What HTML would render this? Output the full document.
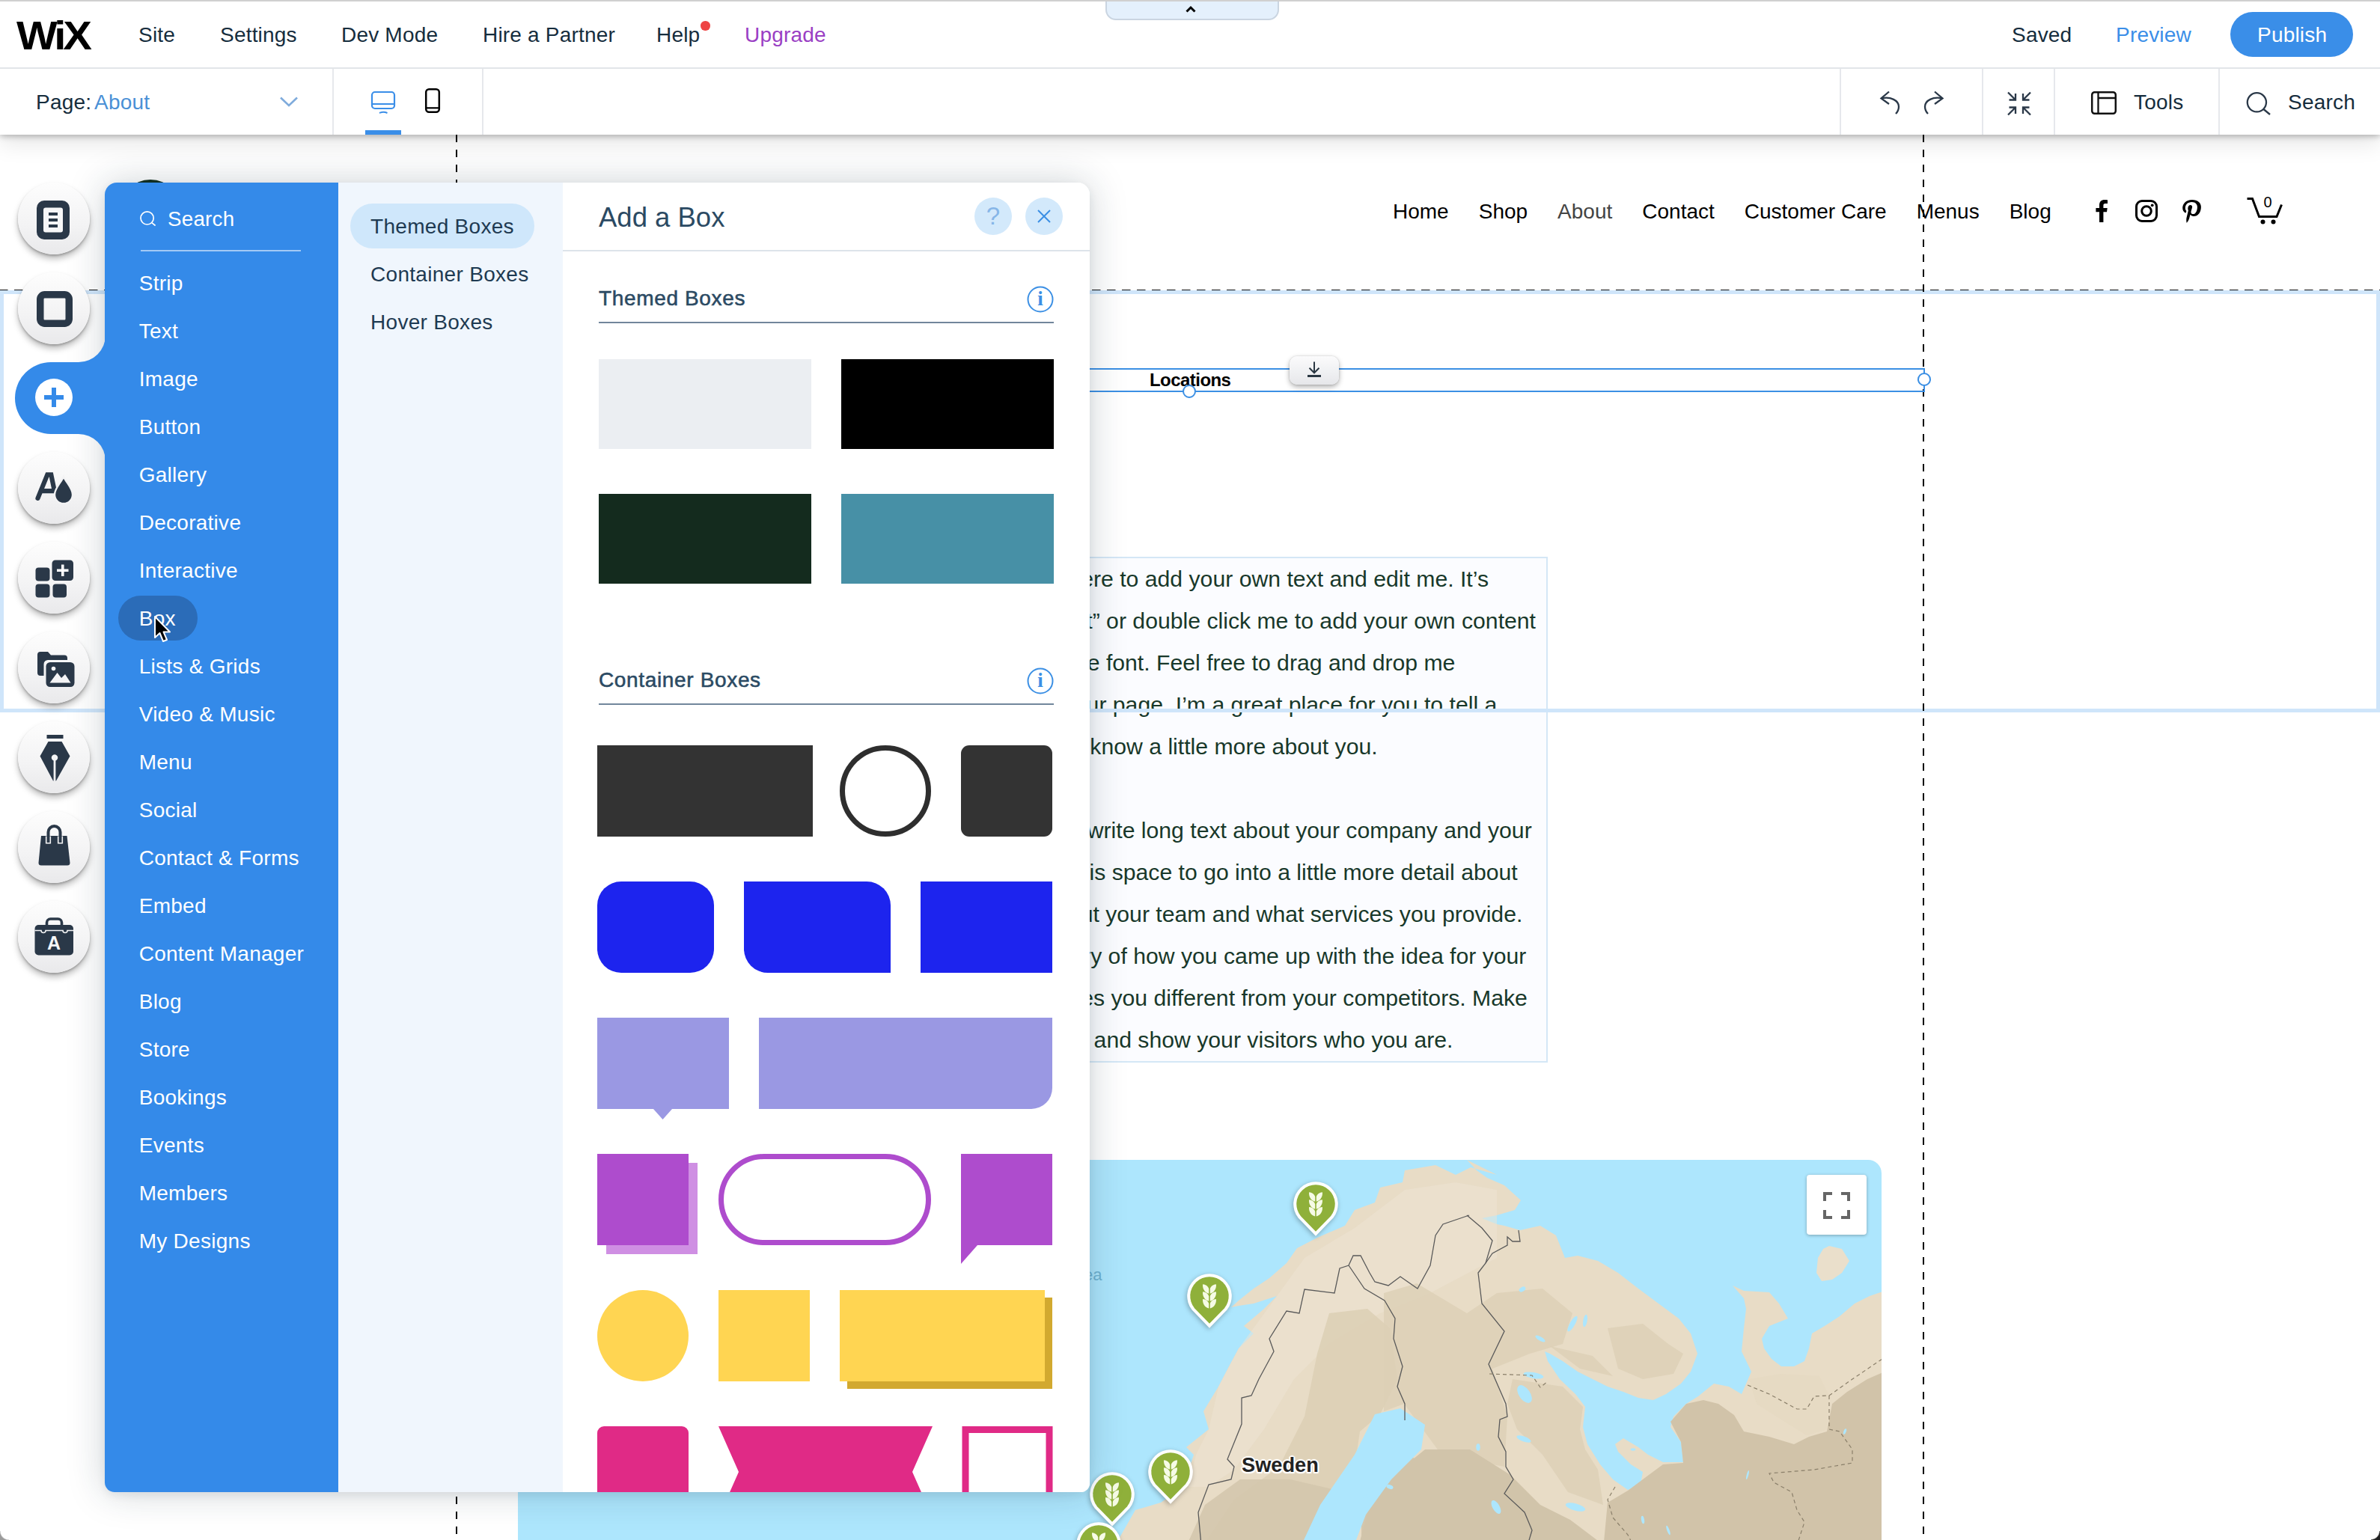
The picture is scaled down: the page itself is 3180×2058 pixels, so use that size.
<!DOCTYPE html>
<html lang="en">
<head>
<meta charset="utf-8">
<title>Wix Editor - Add a Box</title>
<style>
*{box-sizing:border-box;margin:0;padding:0}
html,body{width:3180px;height:2058px;overflow:hidden;background:#fff}
body{position:relative;font-family:"Liberation Sans",Arial,Helvetica,sans-serif;color:#162d3d;font-size:28px;line-height:32px}
.abs{position:absolute}
.t{position:absolute;white-space:nowrap;line-height:32px}
svg{position:absolute;overflow:visible}
/* ---------- top bars ---------- */
#topbar{left:0;top:0;width:3180px;height:92px;background:#fff;border-bottom:2px solid #e2e5e9;z-index:50}
#topline{left:0;top:0;width:3180px;height:2px;background:#d0d0d0;z-index:60}
#bar2{left:0;top:92px;width:3180px;height:88px;background:#fff;z-index:49;box-shadow:0 2px 8px rgba(0,0,0,.28),0 12px 30px rgba(0,0,0,.10)}
.vdiv{position:absolute;top:92px;width:2px;height:88px;background:#e6e8ec;z-index:51}
.top{z-index:55;letter-spacing:.2px}
#publish{left:2980px;top:16px;width:164px;height:60px;border-radius:30px;background:#3a8ee8;z-index:55}
/* ---------- canvas ---------- */
#canvas{left:0;top:0;width:3180px;height:2058px;background:#fff;z-index:1;overflow:hidden}
.nav{position:absolute;white-space:nowrap;top:86px;font-size:28px;line-height:32px;color:#000}
/* ---------- left rail ---------- */
.rb{position:absolute;left:24px;width:96px;height:96px;border-radius:50%;background:linear-gradient(180deg,#fdfdfd 0%,#f3f3f4 60%,#e9e9eb 100%);box-shadow:0 6px 9px rgba(0,0,0,.26),0 2px 3px rgba(0,0,0,.22);z-index:30}
/* ---------- panel ---------- */
#panel{left:140px;top:244px;width:1316px;height:1750px;border-radius:16px 16px 12px 13px;z-index:20;box-shadow:0 0 50px rgba(22,45,61,.21),0 4px 12px rgba(22,45,61,.08);overflow:hidden;background:#fff}
#cat{left:0;top:0;width:312px;height:1750px;background:#348ae9}
#sub{left:312px;top:0;width:300px;height:1750px;background:#f0f6fd}
#main{left:612px;top:0;width:704px;height:1750px;background:#fff}
.ci{position:absolute;left:45.700px;white-space:nowrap;color:#fff;font-size:28px;line-height:32px;letter-spacing:.27px}
.si{position:absolute;left:43px;white-space:nowrap;color:#1e3a52;font-size:28px;line-height:32px;letter-spacing:.3px}
</style>
</head>
<body>
<!-- ================= TOP BAR ================= -->
<div id="topbar" class="abs"></div>
<div id="topline" class="abs"></div>
<div class="t top" style="left:22px;top:16.500px;font-size:58px;line-height:64px;font-weight:bold;color:#000;letter-spacing:-4px;transform-origin:0 0;transform:scale(1.0,.94)">WiX</div>
<div class="t top" style="left:185px;top:31px">Site</div>
<div class="t top" style="left:294px;top:31px">Settings</div>
<div class="t top" style="left:456px;top:31px">Dev Mode</div>
<div class="t top" style="left:645px;top:31px">Hire a Partner</div>
<div class="t top" style="left:877px;top:31px">Help</div>
<div class="abs top" style="left:936px;top:28px;width:12.500px;height:12.500px;border-radius:50%;background:#ee4444"></div>
<div class="t top" style="left:995px;top:31px;color:#9a3fc4">Upgrade</div>
<div class="abs top" style="left:1477px;top:-4px;width:232px;height:31px;border-radius:0 0 14px 14px;background:#e4f0fc;border:2px solid #cad5e1"></div>
<svg class="top" style="left:1584px;top:8px" width="14" height="9" viewBox="0 0 14 9"><path d="M1.5 7.5 L7 2 L12.5 7.5" fill="none" stroke="#000" stroke-width="3"/></svg>
<div class="t top" style="left:2688px;top:31px">Saved</div>
<div class="t top" style="left:2827px;top:31px;color:#3a8ee8">Preview</div>
<div id="publish" class="abs"></div>
<div class="t top" style="left:3016px;top:31px;color:#fff">Publish</div>

<!-- ================= SECOND BAR ================= -->
<div id="bar2" class="abs"></div>
<div class="t top" style="left:48px;top:121px">Page:</div>
<div class="t top" style="left:126px;top:121px;color:#4a90d6">About</div>
<div class="vdiv" style="left:444px"></div>
<div class="vdiv" style="left:644px"></div>
<div class="vdiv" style="left:2458px"></div>
<div class="vdiv" style="left:2648px"></div>
<div class="vdiv" style="left:2744px"></div>
<div class="vdiv" style="left:2964px"></div>
<div class="abs top" style="left:488px;top:174px;width:48px;height:6px;background:#3a8ee8"></div>
<div class="t top" style="left:2851px;top:121px">Tools</div>
<div class="t top" style="left:3057px;top:121px">Search</div>
<svg class="top" style="left:0;top:92px" width="3180" height="88" viewBox="0 92 3180 88"><path d="M375 130.500 L386 141 L397 130.500" fill="none" stroke="#7fabdc" stroke-width="2.600"/><rect x="497" y="123" width="30" height="22" rx="4" fill="none" stroke="#3a8ee8" stroke-width="2.200"/><path d="M497 139 H527" stroke="#3a8ee8" stroke-width="2"/><path d="M507 151 Q512 148.500 517.500 151" fill="none" stroke="#3a8ee8" stroke-width="2"/><rect x="569.200" y="119.200" width="17.600" height="30.600" rx="4" fill="none" stroke="#000" stroke-width="2.500"/><path d="M569 144.300 H587" stroke="#000" stroke-width="2.200"/><path d="M2524 122.500 L2513.500 131.500 L2524 139" fill="none" stroke="#2a3848" stroke-width="2.300"/><path d="M2514.500 131.300 C2526 129 2537 134 2537 142.500 C2537 146.500 2535.500 149.500 2533 152" fill="none" stroke="#2a3848" stroke-width="2.300"/><path d="M2585 122.500 L2595.500 131.500 L2585 139" fill="none" stroke="#2a3848" stroke-width="2.300"/><path d="M2594.500 131.300 C2583 129 2572 134 2572 142.500 C2572 146.500 2573.500 149.500 2576 152" fill="none" stroke="#2a3848" stroke-width="2.300"/><path d="M2683 123.500 L2693 133.500 M2693 125 V133.500 H2684.500 M2713 123.500 L2703 133.500 M2703 125 V133.500 H2711.500 M2683 153.500 L2693 143.500 M2693 152 V143.500 H2684.500 M2713 153.500 L2703 143.500 M2703 152 V143.500 H2711.500" fill="none" stroke="#2a3848" stroke-width="2.300"/><rect x="2795.200" y="123.200" width="31.600" height="28.600" rx="3.500" fill="none" stroke="#111" stroke-width="2.500"/><path d="M2803.500 123 V152 M2803.500 131 H2827" stroke="#111" stroke-width="2.300" fill="none"/><circle cx="3015.400" cy="136.800" r="12.600" fill="none" stroke="#2a3848" stroke-width="2.300"/><path d="M3024.500 146 L3033 153" stroke="#2a3848" stroke-width="2.300"/></svg>

<!-- ================= CANVAS ================= -->
<div id="canvas" class="abs">
<div class="abs" style="left:159px;top:240px;width:84px;height:84px;border-radius:50%;background:#12301f"></div>
<div class="abs" style="left:1861px;top:266.500px;display:flex;gap:40px;font-size:28px;line-height:32px;white-space:nowrap"><span style="color:#000">Home</span><span style="color:#000">Shop</span><span style="color:#444">About</span><span style="color:#000">Contact</span><span style="color:#000">Customer Care</span><span style="color:#000">Menus</span><span style="color:#000">Blog</span></div>
<svg style="left:2800px;top:267px" width="16" height="30" viewBox="0 0 16 30"><path d="M10.4 30 V16.3 H15 L15.7 11 H10.4 V7.6 C10.4 6 10.9 5 13.1 5 H16 V0.2 C15.5 0.1 13.8 0 11.9 0 C7.8 0 5 2.5 5 7 V11 H0.4 V16.3 H5 V30 Z" fill="#000"/></svg>
<svg style="left:2853px;top:267px" width="30" height="30" viewBox="0 0 30 30"><rect x="1.5" y="1.5" width="27" height="27" rx="7.5" fill="none" stroke="#000" stroke-width="3"/><circle cx="15" cy="15" r="6.3" fill="none" stroke="#000" stroke-width="3"/><circle cx="22.7" cy="7.3" r="1.9" fill="#000"/></svg>
<svg style="left:2916px;top:267px" width="25" height="31" viewBox="0 0 25 31"><path d="M13 0 C4.5 0 0.2 5.8 0.2 10.8 C0.2 13.8 1.4 16.4 3.9 17.4 C4.3 17.6 4.7 17.4 4.8 17 L5.2 15.500 C5.3 15 5.300 14.9 5 14.500 C4.3 13.6 3.800 12.5 3.800 10.9 C3.800 6.500 7.100 2.9 12.500 2.9 C17.300 2.9 19.900 5.800 19.900 9.700 C19.900 14.800 17.600 19.100 14.300 19.100 C12.400 19.100 11 17.600 11.500 15.700 C12 13.500 13.100 11.100 13.100 9.500 C13.100 8.100 12.300 6.900 10.700 6.900 C8.800 6.900 7.300 8.800 7.300 11.400 C7.300 13.100 7.900 14.200 7.900 14.200 L5.600 23.800 C4.900 26.700 5.500 30.200 5.600 30.500 C5.600 30.700 5.900 30.800 6 30.600 C6.200 30.400 8.400 27.600 9.200 24.800 C9.400 24 10.500 19.800 10.500 19.800 C11.100 21 13 22.100 15 22.100 C20.900 22.100 24.900 16.700 24.900 9.500 C24.900 4.100 20.300 0 13 0 Z" fill="#000"/></svg>
<svg style="left:3002px;top:264px" width="48" height="36" viewBox="0 0 48 36"><path d="M0.5 1.5 H7.5 L16.5 25.5 H40 L46.5 9.5" fill="none" stroke="#000" stroke-width="3"/><circle cx="21.5" cy="32.5" r="3" fill="#000"/><circle cx="35.5" cy="32.5" r="3" fill="#000"/></svg>
<div class="t" style="left:3019px;top:259px;width:22px;text-align:center;font-size:20px;line-height:22px;color:#000">0</div>
<div class="abs" style="left:1000px;top:744px;width:1068px;height:676px;background:#fbfcff;border:2px solid #d4e7f6"></div>
<div class="t" style="right:1191.0px;top:745.7px;font-size:30.2px;line-height:56px;color:#18382a">I’m a paragraph. Click here to add your own text and edit me. It’s</div>
<div class="t" style="right:1128.0px;top:801.7px;font-size:30.2px;line-height:56px;color:#18382a">easy. Just click “Edit Text” or double click me to add your own content</div>
<div class="t" style="right:1235.6px;top:857.7px;font-size:30.2px;line-height:56px;color:#18382a">and make changes to the font. Feel free to drag and drop me</div>
<div class="t" style="right:1179.7px;top:913.7px;font-size:30.2px;line-height:56px;color:#18382a">anywhere you like on your page. I’m a great place for you to tell a</div>
<div class="t" style="right:1339.4px;top:969.7px;font-size:30.2px;line-height:56px;color:#18382a">story and let your users know a little more about you.</div>
<div class="t" style="right:1133.3px;top:1081.7px;font-size:30.2px;line-height:56px;color:#18382a">This is a great space to write long text about your company and your</div>
<div class="t" style="right:1152.3px;top:1137.7px;font-size:30.2px;line-height:56px;color:#18382a">services. You can use this space to go into a little more detail about</div>
<div class="t" style="right:1145.7px;top:1193.7px;font-size:30.2px;line-height:56px;color:#18382a">your company. Talk about your team and what services you provide.</div>
<div class="t" style="right:1140.6px;top:1249.7px;font-size:30.2px;line-height:56px;color:#18382a">Tell your visitors the story of how you came up with the idea for your</div>
<div class="t" style="right:1139.1px;top:1305.7px;font-size:30.2px;line-height:56px;color:#18382a">business and what makes you different from your competitors. Make</div>
<div class="t" style="right:1238.5px;top:1361.7px;font-size:30.2px;line-height:56px;color:#18382a">your company stand out and show your visitors who you are.</div>
<div class="abs" style="left:0;top:388px;width:3180px;height:564px;border:5px solid #cfe5fa"></div>
<svg style="left:0;top:0" width="3180" height="2058" viewBox="0 0 3180 2058"><g stroke="#000" fill="none"><path d="M-1 387.500 H3180" stroke-width="1" stroke="#111" stroke-dasharray="11.500 8.500"/><path d="M610 180 V2058 M2570 180 V2058" stroke-width="2" stroke-dasharray="10 10"/></g></svg>
<div class="t" style="left:1536px;top:493px;font-size:24px;letter-spacing:-.55px;line-height:30px;font-weight:bold;color:#000">Locations</div>
<div class="abs" style="left:1000px;top:492px;width:1572px;height:32px;border:2px solid #3b8fe4"></div>
<div class="abs" style="left:1580px;top:514px;width:18px;height:18px;border-radius:50%;background:#fff;border:2px solid #3b8fe4"></div>
<div class="abs" style="left:2562px;top:498px;width:18px;height:18px;border-radius:50%;background:#fff;border:2px solid #3b8fe4"></div>
<div class="abs" style="left:1723px;top:476px;width:66px;height:38px;border-radius:10px;background:linear-gradient(180deg,#fbfbfc,#e6e7ea);box-shadow:0 3px 7px rgba(0,0,0,.32),0 0 2px rgba(0,0,0,.2)"></div>
<svg style="left:1746px;top:483px" width="20" height="22" viewBox="0 0 20 22"><path d="M10 0.500 V15 M3.500 8.800 L10 15.300 L16.500 8.800" fill="none" stroke="#2a3742" stroke-width="2"/><rect x="1" y="18" width="18" height="3" fill="#2a3742"/></svg>
<div class="abs" style="left:692px;top:1550px;width:1822px;height:520px;border-radius:0 18px 0 0;overflow:hidden;background:#ade6fd">
<svg style="left:0;top:0" width="1822" height="520" viewBox="692 1550 1822 520">
<polygon points="1490,2065 1517,2018 1551,2008 1581,1987 1595,1944 1585,1934 1615,1910 1608,1886 1628,1853 1642,1826 1655,1802 1675,1782 1662,1772 1689,1749 1706,1732 1675,1742 1655,1745 1645,1747 1655,1738 1675,1722 1696,1708 1719,1688 1733,1668 1760,1654 1797,1638 1810,1617 1837,1607 1844,1587 1874,1580 1877,1564 1918,1557 1945,1570 1965,1560 2000,1570 1960,1550 1973,1564 1987,1574 2010,1584 2032,1604 2024,1617 2000,1624 1980,1628 2000,1636 2010,1638 2031,1644 2058,1638 2079,1651 2091,1681 2108,1678 2135,1685 2162,1701 2189,1722 2216,1742 2243,1762 2259,1782 2268,1809 2259,1833 2246,1849 2226,1863 2209,1871 2189,1868 2169,1860 2148,1853 2128,1843 2108,1833 2088,1819 2071,1809 2064,1806 2068,1819 2084,1843 2105,1863 2118,1880 2115,1907 2121,1930 2138,1957 2155,1977 2175,1991 2192,1984 2195,1967 2179,1957 2162,1940 2158,1930 2169,1922 2189,1934 2202,1944 2222,1954 2249,1954 2246,1927 2232,1907 2236,1893 2253,1876 2269,1866 2290,1849 2310,1853 2327,1863 2340,1833 2327,1806 2330,1775 2333,1749 2330,1735 2315,1718 2330,1725 2364,1727 2377,1742 2389,1762 2364,1772 2354,1789 2357,1802 2367,1816 2380,1826 2397,1826 2411,1819 2417,1802 2421,1782 2438,1772 2458,1759 2478,1742 2498,1732 2518,1725 2520,2070 1490,2070" fill="#e8dcc6"/>
<polygon points="1655,1802 1706,1732 1743,1681 1810,1641 1877,1590 1945,1580 2000,1590 2000,1681 1911,1728 1844,1755 1776,1796 1729,1843 1689,1910 1649,1964 1615,1987 1588,1987 1598,1944 1615,1910 1628,1853" fill="#eee4d3" opacity=".5"/>
<polygon points="1776,1755 1827,1749 1857,1775 1867,1843 1844,1890 1817,1913 1810,1960 1770,2018 1743,2065 1608,2065 1649,2004 1709,1960 1743,1893 1760,1809" fill="#dccfb4" opacity=".85"/>
<polygon points="1849,1728 1893,1715 1960,1755 2000,1728 2061,1722 2101,1755 2088,1796 2044,1809 1994,1829 2014,1893 2010,1960 1926,1944 1876,1876 1849,1886" fill="#dccfb5" opacity=".8"/>
<polygon points="2232,1900 2253,1876 2276,1871 2296,1876 2317,1891 2330,1913 2364,1920 2397,1930 2417,1920 2441,1913 2448,1876 2468,1860 2495,1843 2518,1833 2518,2071 2142,2071 2148,2008 2175,1992 2195,1977 2222,1957 2249,1955 2246,1927" fill="#d1c3a9"/>
<polygon points="1819,1977 1859,1937 1893,1950 1926,1950 1960,1957 1994,1977 2021,1977 2037,2011 2051,2071 1819,2071" fill="#d1c3a9" opacity=".9"/>
<polygon points="2337,1843 2380,1836 2431,1839 2444,1865 2441,1910 2414,1918 2380,1897 2347,1876" fill="#e5d9c2" opacity=".9"/>
<polygon points="2148,1775 2195,1769 2229,1796 2249,1809 2236,1836 2195,1843 2162,1829" fill="#dccfb5" opacity=".8"/>
<polygon points="2071,1799 2128,1812 2155,1839 2111,1829" fill="#dccfb5" opacity=".8"/>
<polygon points="2021,1843 2088,1853 2115,1880 2111,1910 2118,1937 2135,1964 2142,2011 2095,1994 2061,1944 2027,1910 2014,1876" fill="#dccfb5" opacity=".8"/>
<polygon points="1814,2071 1830,2011 1871,1964 1904,1937 1964,1937 2018,1971 2058,2011 2098,2031 2151,2071" fill="#d1c4aa"/>
<polygon points="1583,2071 1610,2011 1657,1977 1724,1977 1784,1991 1760,2031 1738,2071" fill="#d4c7ad" opacity=".9"/>
<polygon points="1837,1890 1871,1882 1904,1904 1899,1937 1859,1977 1825,2024 1807,2071 1736,2071 1764,2011 1810,1944" fill="#ade6fd"/>
<ellipse cx="2034" cy="1723" rx="4.7" ry="3.0" transform="rotate(-30 2034 1723)" fill="#ade6fd"/>
<ellipse cx="2049" cy="1838" rx="13.5" ry="4.0" transform="rotate(10 2049 1838)" fill="#ade6fd"/>
<ellipse cx="2037" cy="1863" rx="7.4" ry="13.5" transform="rotate(-35 2037 1863)" fill="#ade6fd"/>
<ellipse cx="2101" cy="1769" rx="11.8" ry="3.4" transform="rotate(-60 2101 1769)" fill="#ade6fd"/>
<ellipse cx="2118" cy="1765" rx="2.7" ry="8.4" transform="rotate(10 2118 1765)" fill="#ade6fd"/>
<ellipse cx="2036" cy="1923" rx="10.1" ry="3.4" transform="rotate(20 2036 1923)" fill="#ade6fd"/>
<ellipse cx="1999" cy="2014" rx="4.7" ry="10.1" transform="rotate(-30 1999 2014)" fill="#ade6fd"/>
<ellipse cx="2105" cy="2014" rx="13.5" ry="4.7" transform="rotate(15 2105 2014)" fill="#ade6fd"/>
<ellipse cx="2182" cy="1937" rx="3.4" ry="1.7" transform="rotate(0 2182 1937)" fill="#ade6fd"/>
<ellipse cx="2058" cy="1789" rx="7.4" ry="2.7" transform="rotate(30 2058 1789)" fill="#ade6fd"/>
<ellipse cx="2465" cy="1913" rx="1.7" ry="4.0" transform="rotate(20 2465 1913)" fill="#ade6fd"/>
<ellipse cx="2335" cy="1971" rx="1.3" ry="6.1" transform="rotate(15 2335 1971)" fill="#ade6fd"/>
<ellipse cx="2195" cy="2031" rx="2.0" ry="5.4" transform="rotate(-10 2195 2031)" fill="#ade6fd"/>
<ellipse cx="2229" cy="2045" rx="1.7" ry="6.7" transform="rotate(-20 2229 2045)" fill="#ade6fd"/>
<ellipse cx="1830" cy="1994" rx="3.4" ry="8.1" transform="rotate(30 1830 1994)" fill="#ade6fd"/>
<ellipse cx="1857" cy="1987" rx="4.7" ry="2.7" transform="rotate(20 1857 1987)" fill="#ade6fd"/>
<ellipse cx="1975" cy="1934" rx="2.7" ry="4.7" transform="rotate(0 1975 1934)" fill="#ade6fd"/>
<ellipse cx="1820" cy="2004" rx="2.0" ry="3.4" transform="rotate(0 1820 2004)" fill="#ade6fd"/>
<polygon points="2444,1665 2461,1669 2471,1685 2461,1701 2448,1710 2434,1712 2427,1701 2429,1681 2436,1669" fill="#eadfcb"/>
<polyline points="1605,2065 1601,2021 1615,1984 1645,1977 1649,1960 1640,1950 1659,1903 1659,1868 1672,1865 1682,1843 1702,1806 1696,1789 1719,1752 1736,1755 1743,1723 1783,1728 1790,1695 1802,1691 1808,1678 1818,1678 1830,1701 1837,1713 1855,1718 1871,1706 1894,1722 1911,1691 1918,1651 1928,1636 1963,1624" fill="none" stroke="#5a5a5a" stroke-width="1.3"/>
<polyline points="1802,1691 1823,1722 1850,1738 1864,1762 1862,1789 1874,1826 1867,1853 1877,1876 1877,1898" fill="none" stroke="#5a5a5a" stroke-width="1.3"/>
<polyline points="1960,1624 1980,1641 1994,1658 1985,1688 1975,1701 1980,1742 2010,1779 1989,1823 2012,1876 2014,1893 2004,1897 2002,1920 2012,1940 2012,1960 2022,1977 2010,1996 2037,2021 2047,2045 2041,2065" fill="none" stroke="#5a5a5a" stroke-width="1.3"/>
<polyline points="1985,1688 1994,1675 2014,1664 2014,1653 2021,1659 2031,1659 2029,1644" fill="none" stroke="#5a5a5a" stroke-width="1.3"/>
<polyline points="1990,1836 2047,1838 2058,1854 2068,1846" fill="none" stroke="#8a7f6a" stroke-width="1.2" stroke-dasharray="5 4"/>
<polyline points="2335,1851 2364,1863 2401,1883 2414,1883 2424,1866 2444,1865 2475,1843 2518,1814" fill="none" stroke="#8a7f6a" stroke-width="1.2" stroke-dasharray="5 4"/>
<polyline points="2444,1865 2444,1910 2458,1913 2475,1937 2475,1955 2424,1964 2364,1969 2370,1981 2394,1994 2401,2018 2411,2034 2401,2065" fill="none" stroke="#8a7f6a" stroke-width="1.2" stroke-dasharray="5 4"/>
<polyline points="2158,1987 2148,2004 2155,2028 2175,2051 2182,2065" fill="none" stroke="#8a7f6a" stroke-width="1.2" stroke-dasharray="5 4"/>
</svg>
<div class="t" style="left:630px;top:141px;font-size:22px;line-height:26px;color:#6fb3d2">Norwegian Sea</div>
<div class="t" style="left:967px;top:392.5px;font-size:27.200px;line-height:30px;font-weight:bold;color:#222;text-shadow:-2px 0 1px #fff,2px 0 1px #fff,0 -2px 1px #fff,0 2px 1px #fff,-1.500px -1.500px 1px #fff,1.500px 1.500px 1px #fff,-1.500px 1.500px 1px #fff,1.500px -1.500px 1px #fff">Sweden</div>
<div class="abs" style="left:1722px;top:20px;width:80px;height:80px;border-radius:4px;background:#fff;box-shadow:0 1px 4px rgba(0,0,0,.3)"></div>
<svg style="left:1744px;top:43px" width="36" height="36" viewBox="0 0 36 36"><path d="M2 12 V2 H12 M24 2 H34 V12 M34 24 V34 H24 M12 34 H2 V24" fill="none" stroke="#666" stroke-width="4"/></svg>
<svg style="left:1033.7px;top:26.9px" width="64" height="78" viewBox="-32 -32 64 78"><path d="M0 42.700 L-23.400 18.500 A29.800 29.800 0 1 1 23.400 18.500 Z" fill="#fff" style="filter:drop-shadow(-1px 2px 3px rgba(0,0,0,.28))"/><path d="M0 36.800 L-20 16.200 A25.750 25.750 0 1 1 20 16.200 Z" fill="#8fb03a"/><path d="M0.80 -3.20 L0.80 -9.70 C1.80 -13.40 5.00 -15.40 8.90 -15.80 C9.60 -10.20 6.50 -4.70 0.80 -3.20 Z M-0.80 -3.20 L-0.80 -9.70 C-1.80 -13.40 -5.00 -15.40 -8.90 -15.80 C-9.60 -10.20 -6.50 -4.70 -0.80 -3.20 Z M0.80 6.80 L0.80 0.30 C1.80 -3.40 5.00 -5.40 8.90 -5.80 C9.60 -0.20 6.50 5.30 0.80 6.80 Z M-0.80 6.80 L-0.80 0.30 C-1.80 -3.40 -5.00 -5.40 -8.90 -5.80 C-9.60 -0.20 -6.50 5.30 -0.80 6.80 Z M0.80 16.60 L0.80 10.10 C1.80 6.40 5.00 4.40 8.90 4.00 C9.60 9.60 6.50 15.10 0.80 16.60 Z M-0.80 16.60 L-0.80 10.10 C-1.80 6.40 -5.00 4.40 -8.90 4.00 C-9.60 9.60 -6.50 15.10 -0.80 16.60 Z " fill="#f6fbe6"/></svg>
<svg style="left:891.6px;top:150.3px" width="64" height="78" viewBox="-32 -32 64 78"><path d="M0 42.700 L-23.400 18.500 A29.800 29.800 0 1 1 23.400 18.500 Z" fill="#fff" style="filter:drop-shadow(-1px 2px 3px rgba(0,0,0,.28))"/><path d="M0 36.800 L-20 16.200 A25.750 25.750 0 1 1 20 16.200 Z" fill="#8fb03a"/><path d="M0.80 -3.20 L0.80 -9.70 C1.80 -13.40 5.00 -15.40 8.90 -15.80 C9.60 -10.20 6.50 -4.70 0.80 -3.20 Z M-0.80 -3.20 L-0.80 -9.70 C-1.80 -13.40 -5.00 -15.40 -8.90 -15.80 C-9.60 -10.20 -6.50 -4.70 -0.80 -3.20 Z M0.80 6.80 L0.80 0.30 C1.80 -3.40 5.00 -5.40 8.90 -5.80 C9.60 -0.20 6.50 5.30 0.80 6.80 Z M-0.80 6.80 L-0.80 0.30 C-1.80 -3.40 -5.00 -5.40 -8.90 -5.80 C-9.60 -0.20 -6.50 5.30 -0.80 6.80 Z M0.80 16.60 L0.80 10.10 C1.80 6.40 5.00 4.40 8.90 4.00 C9.60 9.60 6.50 15.10 0.80 16.60 Z M-0.80 16.60 L-0.80 10.10 C-1.80 6.40 -5.00 4.40 -8.90 4.00 C-9.60 9.60 -6.50 15.10 -0.80 16.60 Z " fill="#f6fbe6"/></svg>
<svg style="left:839.7px;top:385.0px" width="64" height="78" viewBox="-32 -32 64 78"><path d="M0 42.700 L-23.400 18.500 A29.800 29.800 0 1 1 23.400 18.500 Z" fill="#fff" style="filter:drop-shadow(-1px 2px 3px rgba(0,0,0,.28))"/><path d="M0 36.800 L-20 16.200 A25.750 25.750 0 1 1 20 16.200 Z" fill="#8fb03a"/><path d="M0.80 -3.20 L0.80 -9.70 C1.80 -13.40 5.00 -15.40 8.90 -15.80 C9.60 -10.20 6.50 -4.70 0.80 -3.20 Z M-0.80 -3.20 L-0.80 -9.70 C-1.80 -13.40 -5.00 -15.40 -8.90 -15.80 C-9.60 -10.20 -6.50 -4.70 -0.80 -3.20 Z M0.80 6.80 L0.80 0.30 C1.80 -3.40 5.00 -5.40 8.90 -5.80 C9.60 -0.20 6.50 5.30 0.80 6.80 Z M-0.80 6.80 L-0.80 0.30 C-1.80 -3.40 -5.00 -5.40 -8.90 -5.80 C-9.60 -0.20 -6.50 5.30 -0.80 6.80 Z M0.80 16.60 L0.80 10.10 C1.80 6.40 5.00 4.40 8.90 4.00 C9.60 9.60 6.50 15.10 0.80 16.60 Z M-0.80 16.60 L-0.80 10.10 C-1.80 6.40 -5.00 4.40 -8.90 4.00 C-9.60 9.60 -6.50 15.10 -0.80 16.60 Z " fill="#f6fbe6"/></svg>
<svg style="left:762.0px;top:415.0px" width="64" height="78" viewBox="-32 -32 64 78"><path d="M0 42.700 L-23.400 18.500 A29.800 29.800 0 1 1 23.400 18.500 Z" fill="#fff" style="filter:drop-shadow(-1px 2px 3px rgba(0,0,0,.28))"/><path d="M0 36.800 L-20 16.200 A25.750 25.750 0 1 1 20 16.200 Z" fill="#8fb03a"/><path d="M0.80 -3.20 L0.80 -9.70 C1.80 -13.40 5.00 -15.40 8.90 -15.80 C9.60 -10.20 6.50 -4.70 0.80 -3.20 Z M-0.80 -3.20 L-0.80 -9.70 C-1.80 -13.40 -5.00 -15.40 -8.90 -15.80 C-9.60 -10.20 -6.50 -4.70 -0.80 -3.20 Z M0.80 6.80 L0.80 0.30 C1.80 -3.40 5.00 -5.40 8.90 -5.80 C9.60 -0.20 6.50 5.30 0.80 6.80 Z M-0.80 6.80 L-0.80 0.30 C-1.80 -3.40 -5.00 -5.40 -8.90 -5.80 C-9.60 -0.20 -6.50 5.30 -0.80 6.80 Z M0.80 16.60 L0.80 10.10 C1.80 6.40 5.00 4.40 8.90 4.00 C9.60 9.60 6.50 15.10 0.80 16.60 Z M-0.80 16.60 L-0.80 10.10 C-1.80 6.40 -5.00 4.40 -8.90 4.00 C-9.60 9.60 -6.50 15.10 -0.80 16.60 Z " fill="#f6fbe6"/></svg>
<svg style="left:743.5px;top:481.7px" width="64" height="78" viewBox="-32 -32 64 78"><path d="M0 42.700 L-23.400 18.500 A29.800 29.800 0 1 1 23.400 18.500 Z" fill="#fff" style="filter:drop-shadow(-1px 2px 3px rgba(0,0,0,.28))"/><path d="M0 36.800 L-20 16.200 A25.750 25.750 0 1 1 20 16.200 Z" fill="#8fb03a"/><path d="M0.80 -3.20 L0.80 -9.70 C1.80 -13.40 5.00 -15.40 8.90 -15.80 C9.60 -10.20 6.50 -4.70 0.80 -3.20 Z M-0.80 -3.20 L-0.80 -9.70 C-1.80 -13.40 -5.00 -15.40 -8.90 -15.80 C-9.60 -10.20 -6.50 -4.70 -0.80 -3.20 Z M0.80 6.80 L0.80 0.30 C1.80 -3.40 5.00 -5.40 8.90 -5.80 C9.60 -0.20 6.50 5.30 0.80 6.80 Z M-0.80 6.80 L-0.80 0.30 C-1.80 -3.40 -5.00 -5.40 -8.90 -5.80 C-9.60 -0.20 -6.50 5.30 -0.80 6.80 Z M0.80 16.60 L0.80 10.10 C1.80 6.40 5.00 4.40 8.90 4.00 C9.60 9.60 6.50 15.10 0.80 16.60 Z M-0.80 16.60 L-0.80 10.10 C-1.80 6.40 -5.00 4.40 -8.90 4.00 C-9.60 9.60 -6.50 15.10 -0.80 16.60 Z " fill="#f6fbe6"/></svg>
</div>
</div>

<!-- ================= LEFT RAIL ================= -->
<div class="rb" style="top:244px"></div>
<div class="rb" style="top:364px"></div>
<div class="rb" style="top:604px"></div>
<div class="rb" style="top:724px"></div>
<div class="rb" style="top:844px"></div>
<div class="rb" style="top:964px"></div>
<div class="rb" style="top:1084px"></div>
<div class="rb" style="top:1204px"></div>
<svg style="left:0;top:0;z-index:21" width="200" height="700" viewBox="0 0 200 700"><path d="M141 412 V448 A36 36 0 0 1 105 484 H68 A48 48 0 0 0 68 580 H105 A36 36 0 0 1 141 616 V660 H160 V412 Z" fill="#348ae9"/></svg>
<div class="abs" style="left:47px;top:506px;width:50px;height:50px;border-radius:50%;background:#fff;z-index:31"></div>
<div class="abs" style="left:59px;top:528px;width:26px;height:6px;background:#348ae9;z-index:32"></div>
<div class="abs" style="left:69px;top:518px;width:6px;height:26px;background:#348ae9;z-index:32"></div>
<svg style="left:0;top:0;z-index:33" width="160" height="1320" viewBox="0 0 160 1320"><rect x="49" y="268" width="44" height="52" rx="10" fill="#2a3848"/><rect x="58" y="277.500" width="26" height="33" rx="3" fill="#f6f6f7"/><rect x="65" y="284" width="12" height="4" fill="#2a3848"/><rect x="65" y="292" width="12" height="4" fill="#2a3848"/><rect x="65" y="300" width="12" height="4" fill="#2a3848"/><rect x="53.750" y="393.750" width="38.500" height="38.500" rx="6" fill="none" stroke="#2a3848" stroke-width="9.500"/><path d="M50.500 665.800 L63.300 634.300 H68.300 L72.800 656.200 H58" fill="none" stroke="#2a3848" stroke-width="6.200" stroke-linecap="round" stroke-linejoin="miter"/><path d="M85 637 C88.500 645 97 652.500 97 661 A12 12 0 0 1 73 661 C73 652.500 81.500 645 85 637 Z" fill="#2a3848" stroke="#f3f3f4" stroke-width="2.400"/><rect x="47.500" y="758.500" width="19" height="18" rx="4" fill="#2a3848"/><rect x="47.500" y="780.500" width="19" height="18" rx="4" fill="#2a3848"/><rect x="70.500" y="780.500" width="18.500" height="18" rx="4" fill="#2a3848"/><rect x="69.500" y="748.500" width="28.500" height="27.500" rx="4.500" fill="#2a3848"/><path d="M83.750 754.500 V770 M76 762.250 H91.500" stroke="#fff" stroke-width="3.600" fill="none"/><path d="M50 875 A4 4 0 0 1 54 871 H64 L68 875.500 H86 A4 4 0 0 1 90 879.500 V882 H64 A5.500 5.500 0 0 0 58.500 887.500 V903 H54 A4 4 0 0 1 50 899 Z" fill="#2a3848"/><rect x="61.500" y="885" width="38" height="33" rx="5.500" fill="#2a3848"/><path d="M66.500 912.500 L76.500 899 L82 906 L87 901 L94.500 912.500 Z" fill="#f4f4f5"/><circle cx="71.500" cy="893.500" r="2.800" fill="#f4f4f5"/><rect x="62.500" y="982" width="22" height="5" fill="#2a3848"/><path d="M64.500 991 H82.500 L93.500 1010.500 L75 1043.500 H74.400 V1016.400 A4.200 4.200 0 1 0 71.600 1016.400 V1043.500 H71 L53.500 1010.500 Z" fill="#2a3848"/><path d="M55 1117 H89.500 L93.500 1153 A3.500 3.500 0 0 1 90 1156.500 H55 A3.500 3.500 0 0 1 51.500 1153 Z" fill="#2a3848"/><path d="M64.500 1117.500 V1127.500 M80.500 1117.500 V1127.500" stroke="#f4f4f5" stroke-width="7.200" fill="none"/><path d="M64.500 1126 V1112 A8 8 0 0 1 80.500 1112 V1126" fill="none" stroke="#2a3848" stroke-width="4"/><rect x="46.500" y="1236" width="51.500" height="40.500" rx="5" fill="#2a3848"/><path d="M62.500 1238 V1233 A5 5 0 0 1 67.500 1228 H77.500 A5 5 0 0 1 82.500 1233 V1238" fill="none" stroke="#2a3848" stroke-width="3.600"/><path d="M46.500 1243.500 H55 A3 3 0 0 0 61 1243.500 H84 A3 3 0 0 0 90 1243.500 H98" fill="none" stroke="#f4f4f5" stroke-width="1.600"/></svg>
<div class="t" style="left:60px;top:1246px;width:24px;text-align:center;font-size:25px;line-height:28px;font-weight:bold;color:#f6f6f7;z-index:34">A</div>

<!-- ================= PANEL ================= -->
<div id="panel" class="abs">
  <div id="cat" class="abs">
<svg style="left:46px;top:36px" width="24" height="24" viewBox="0 0 24 24"><circle cx="10.6" cy="11.4" r="8.6" fill="none" stroke="#fff" stroke-width="1.700"/><path d="M16.8 17.600 L21.600 21.500" stroke="#fff" stroke-width="1.700"/></svg>
<div class="ci" style="left:84px;top:32.500px;font-size:27.700px">Search</div>
<div class="abs" style="left:48px;top:90px;width:214px;height:2px;background:rgba(255,255,255,.55)"></div>
<div class="abs" style="left:18px;top:552px;width:106px;height:60px;border-radius:30px;background:#2b6cb8"></div>
<div class="ci" style="top:118.5px">Strip</div>
<div class="ci" style="top:182.5px">Text</div>
<div class="ci" style="top:246.5px">Image</div>
<div class="ci" style="top:310.5px">Button</div>
<div class="ci" style="top:374.5px">Gallery</div>
<div class="ci" style="top:438.5px">Decorative</div>
<div class="ci" style="top:502.5px">Interactive</div>
<div class="ci" style="top:566.5px">Box</div>
<div class="ci" style="top:630.5px">Lists &amp; Grids</div>
<div class="ci" style="top:694.5px">Video &amp; Music</div>
<div class="ci" style="top:758.5px">Menu</div>
<div class="ci" style="top:822.5px">Social</div>
<div class="ci" style="top:886.5px">Contact &amp; Forms</div>
<div class="ci" style="top:950.5px">Embed</div>
<div class="ci" style="top:1014.5px">Content Manager</div>
<div class="ci" style="top:1078.5px">Blog</div>
<div class="ci" style="top:1142.5px">Store</div>
<div class="ci" style="top:1206.5px">Bookings</div>
<div class="ci" style="top:1270.5px">Events</div>
<div class="ci" style="top:1334.5px">Members</div>
<div class="ci" style="top:1398.5px">My Designs</div>
  </div>
  <div id="sub" class="abs">
<div class="abs" style="left:16px;top:28px;width:246px;height:60px;border-radius:30px;background:#cfe7fb"></div>
<div class="si" style="top:43px">Themed Boxes</div>
<div class="si" style="top:107px">Container Boxes</div>
<div class="si" style="top:171px">Hover Boxes</div>
  </div>
  <div id="main" class="abs">
<div class="t" style="left:48px;top:27px;font-size:36.5px;line-height:40px;color:#2b4a63">Add a Box</div>
<div class="abs" style="left:550px;top:20px;width:50px;height:50px;border-radius:50%;background:#d3e9fb"></div>
<div class="t" style="left:550px;top:26px;width:50px;text-align:center;font-size:33px;line-height:38px;color:#86b6e8">?</div>
<div class="abs" style="left:618px;top:20px;width:50px;height:50px;border-radius:50%;background:#d3e9fb"></div>
<svg style="left:634px;top:36px" width="18" height="18" viewBox="0 0 18 18"><path d="M1 1 L17 17 M17 1 L1 17" stroke="#3b8fe4" stroke-width="2" fill="none"/></svg>
<div class="abs" style="left:0;top:90px;width:704px;height:2px;background:#dde3ea"></div>
<div class="t" style="left:48px;top:138.5px;font-size:28px;letter-spacing:.65px;-webkit-text-stroke:.55px #2b4a63;color:#2b4a63">Themed Boxes</div>
<div class="abs" style="left:48px;top:186px;width:608px;height:2px;background:#71869b"></div>
<svg style="left:620px;top:138px" width="36" height="36" viewBox="0 0 36 36"><circle cx="18" cy="18" r="16.5" fill="#fff" stroke="#3b8fe4" stroke-width="2"/></svg>
<div class="t" style="left:620px;top:139px;width:36px;text-align:center;font-family:'Liberation Serif',serif;font-weight:bold;font-size:27px;line-height:32px;color:#3b8fe4">i</div>
<div class="abs" style="left:48px;top:236px;width:284px;height:120px;background:#ebeef2"></div>
<div class="abs" style="left:372px;top:236px;width:284px;height:120px;background:#000"></div>
<div class="abs" style="left:48px;top:416px;width:284px;height:120px;background:#142b1e"></div>
<div class="abs" style="left:372px;top:416px;width:284px;height:120px;background:#4790a6"></div>
<div class="t" style="left:48px;top:649.0px;font-size:28px;letter-spacing:.65px;-webkit-text-stroke:.55px #2b4a63;color:#2b4a63">Container Boxes</div>
<div class="abs" style="left:48px;top:696px;width:608px;height:2px;background:#71869b"></div>
<svg style="left:620px;top:648px" width="36" height="36" viewBox="0 0 36 36"><circle cx="18" cy="18" r="16.5" fill="#fff" stroke="#3b8fe4" stroke-width="2"/></svg>
<div class="t" style="left:620px;top:649px;width:36px;text-align:center;font-family:'Liberation Serif',serif;font-weight:bold;font-size:27px;line-height:32px;color:#3b8fe4">i</div>
<svg style="left:0;top:0" width="704" height="1750" viewBox="752 244 704 1750"><rect x="798" y="996" width="288" height="122" fill="#333333"/><circle cx="1183" cy="1057" r="57.5" fill="#fff" stroke="#2e2e2e" stroke-width="7"/><rect x="1284" y="996" width="122" height="122" rx="11" fill="#333333"/><rect x="798" y="1178" width="156" height="122" rx="32" fill="#1d24ee"/><path d="M994 1178 H1158 A32 32 0 0 1 1190 1210 V1300 H1026 A32 32 0 0 1 994 1268 Z" fill="#1d24ee"/><rect x="1230" y="1178" width="176" height="122" fill="#1d24ee"/><path d="M798 1360 H974 V1482 H898 L885.5 1496 L873 1482 H798 Z" fill="#9a98e3"/><path d="M1014 1360 H1406 V1454 A28 28 0 0 1 1378 1482 H1014 Z" fill="#9a98e3"/><rect x="810" y="1554" width="122" height="122" fill="#cf8fe3"/><rect x="798" y="1542" width="122" height="122" fill="#ae4ccd"/><rect x="963.5" y="1545.5" width="277" height="115" rx="57.5" fill="#fff" stroke="#ae4ccd" stroke-width="7"/><path d="M1284 1542 H1406 V1664 H1306 L1284 1689 Z" fill="#ae4ccd"/><circle cx="859" cy="1785" r="61" fill="#ffd552"/><rect x="960" y="1724" width="122" height="122" fill="#ffd552"/><rect x="1132" y="1734" width="274" height="122" fill="#d2a92f"/><rect x="1122" y="1724" width="274" height="122" fill="#ffd552"/><rect x="798" y="1906" width="122" height="122" rx="9" fill="#e02a86"/><path d="M960 1906 H1246 L1219 1967 L1246 2028 H960 L987 1967 Z" fill="#e02a86"/><rect x="1290" y="1910.5" width="112" height="113" fill="#fff" stroke="#e02a86" stroke-width="9"/></svg>
  </div>
</div>
<div id="cornerL" class="abs" style="left:0;top:2046px;width:12px;height:12px;z-index:95;background:radial-gradient(circle at 12px 0,rgba(0,0,0,0) 11px,#9b9b9b 12.500px)"></div>
<div id="cornerR" class="abs" style="left:3168px;top:2046px;width:12px;height:12px;z-index:95;background:radial-gradient(circle at 0 0,rgba(0,0,0,0) 10.500px,#222 12px)"></div>
<svg style="left:205px;top:822px;z-index:90" width="30" height="40" viewBox="0 0 30 40"><path d="M2 2 V30 L8.500 24 L13 35 L18 33 L13.500 22.500 H22 Z" fill="#000" stroke="#fff" stroke-width="2" stroke-linejoin="round"/></svg>
</body>
</html>
